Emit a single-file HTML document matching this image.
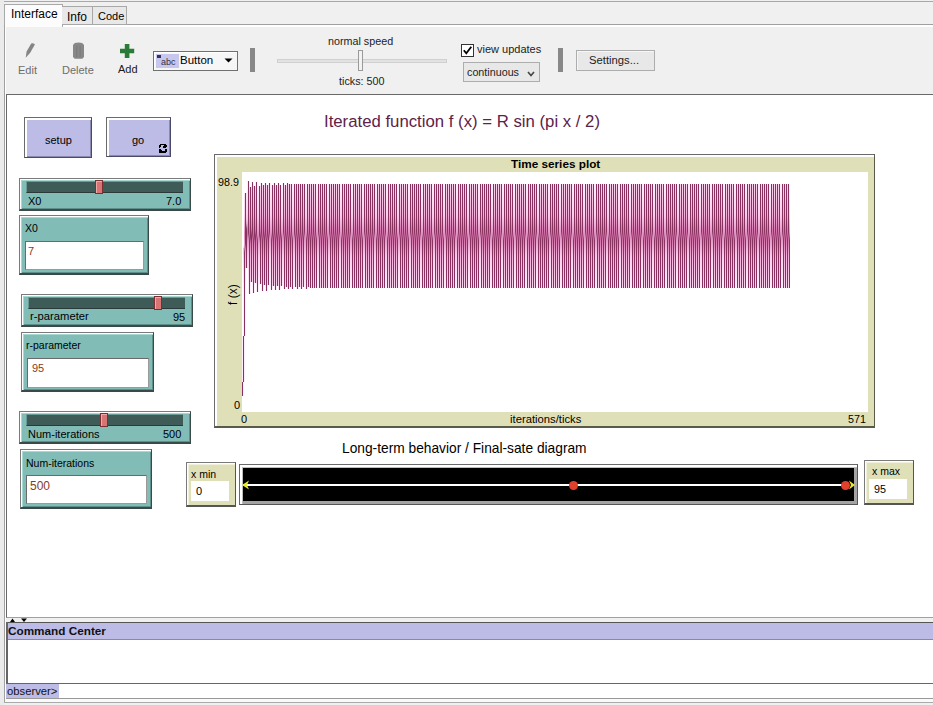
<!DOCTYPE html>
<html><head><meta charset="utf-8">
<style>
*{box-sizing:border-box;margin:0;padding:0}
html,body{width:933px;height:705px;overflow:hidden;background:#f0f0f0;font-family:"Liberation Sans",sans-serif;color:#000}
.a{position:absolute}
.t{position:absolute;white-space:nowrap;line-height:1}
.btn{position:absolute;background:#bcbce6;border-top:1px solid #6a6a6a;border-left:1px solid #6a6a6a;border-right:1px solid #4a4a68;border-bottom:1px solid #4a4a68;box-shadow:inset 2px 2px 0 #fff,inset -1px -1px 0 #8a8ab0}
.tw{position:absolute;background:#82bcb7;border-top:1px solid #7a7a7a;border-left:1px solid #7a7a7a;border-right:1px solid #3a4a48;border-bottom:2px solid #3a4a48;box-shadow:inset 1px 1px 0 #fff,inset 2px 2px 0 #a8d8d2,inset -1px -1px 0 #5f8f8a}
.trk{position:absolute;background:#3f5b58;border-top:1px solid #6a9a95;border-left:1px solid #6a9a95;border-bottom:1px solid #2a3a38}
.thumb{position:absolute;width:8px;height:14px;background:#d87474;border:1px solid #7a3030;box-shadow:inset 1px 1px 0 #f0a8a8}
.fld{position:absolute;background:#fff;border:1px solid #6a6a6a;border-right-color:#9a9a9a;border-bottom-color:#9a9a9a}
.bw{position:absolute;background:#e0e0b8;border-top:1px solid #7a7a7a;border-left:1px solid #7a7a7a;border-right:1px solid #555;border-bottom:2px solid #555;box-shadow:inset 1px 1px 0 #fff,inset 2px 2px 0 #f0f0dc}
.val{color:#8a3a1c}
</style></head><body>
<!-- left strip -->
<div class="a" style="left:0;top:0;width:4px;height:705px;background:#ebebeb"></div>
<!-- top line -->
<div class="a" style="left:4px;top:1px;width:929px;height:1px;background:#a8a8a8"></div>
<!-- tab strip bottom line -->
<div class="a" style="left:62px;top:24px;width:871px;height:1px;background:#a0a0a0"></div>
<!-- tabs -->
<div class="a" style="left:4px;top:4px;width:59px;height:23px;background:#fcfcfc;border:1px solid #a8a8a8;border-bottom:none"></div>
<div class="t" style="left:11px;top:8px;font-size:12px">Interface</div>
<div class="a" style="left:62px;top:6px;width:31px;height:19px;background:#e8e8e8;border:1px solid #a8a8a8;border-left:none"></div>
<div class="t" style="left:67px;top:11px;font-size:12px">Info</div>
<div class="a" style="left:92px;top:6px;width:35px;height:19px;background:#e8e8e8;border:1px solid #a8a8a8"></div>
<div class="t" style="left:98px;top:11px;font-size:11px">Code</div>
<!-- panel left line + highlight -->
<div class="a" style="left:4px;top:25px;width:1px;height:678px;background:#a0a0a0"></div>
<div class="a" style="left:5px;top:25px;width:1px;height:677px;background:#fff"></div>
<div class="a" style="left:63px;top:25px;width:870px;height:2px;background:#fff"></div>

<!-- toolbar -->
<svg class="a" style="left:24px;top:42px" width="12" height="17" viewBox="0 0 12 17"><path d="M1.7,15.8 L2.6,9.5 L7.2,1.6 Q9,0.6 10.9,2.4 L6.2,10.8 Z" fill="#858585"/></svg>
<div class="t" style="left:18px;top:65px;font-size:11px;color:#6d6d6d">Edit</div>
<svg class="a" style="left:72px;top:42px" width="13" height="18" viewBox="0 0 13 18"><path d="M2.8,1 Q6.5,0.2 10.2,1 L12,3 V15 L10.3,16.7 H2.7 L1,15 V3 Z" fill="#878787"/><path d="M4.7,4 V15 M8.2,4 V15" stroke="#777" stroke-width="0.8"/></svg>
<div class="t" style="left:62px;top:65px;font-size:11px;color:#6d6d6d">Delete</div>
<svg class="a" style="left:120px;top:44px" width="15" height="15" viewBox="0 0 15 15"><path d="M4.8,0 H9.4 V4.7 H14.2 V9.2 H9.4 V14 H4.8 V9.2 H0 V4.7 H4.8 Z" fill="#2a7a38"/></svg>
<div class="t" style="left:118px;top:64px;font-size:11px;color:#1a1a1a">Add</div>
<!-- widget dropdown -->
<div class="a" style="left:153px;top:51px;width:85px;height:20px;background:#f6f6f6;border:1px solid #707070;box-shadow:inset 1px 1px 0 #fff"></div>
<div class="a" style="left:156px;top:54px;width:23px;height:14px;background:#c6c6ee"></div>
<div class="t" style="left:161px;top:58px;font-size:9px;color:#334">abc</div>
<div class="a" style="left:157px;top:55px;width:4px;height:3px;background:#335"></div>
<div class="t" style="left:180px;top:55px;font-size:11.5px">Button</div>
<svg class="a" style="left:224px;top:58px" width="10" height="6"><path d="M0.5,0.5 H8.5 L4.5,4.5 Z" fill="#000"/></svg>
<div class="a" style="left:250px;top:48px;width:5px;height:24px;background:#888"></div>
<!-- speed slider -->
<div class="t" style="left:328px;top:36px;font-size:10.75px;color:#222">normal speed</div>
<div class="a" style="left:277px;top:59px;width:170px;height:4px;background:#e2e2e2;border:1px solid #d0d0d0"></div>
<div class="a" style="left:358px;top:50px;width:5px;height:21px;background:#f2f2f2;border:1px solid #9a9a9a"></div>
<div class="t" style="left:339px;top:76px;font-size:10.75px;color:#222">ticks: 500</div>
<!-- view updates -->
<div class="a" style="left:461px;top:44px;width:13px;height:13px;background:#fff;border:1px solid #333"></div>
<svg class="a" style="left:462px;top:45px" width="11" height="11"><path d="M1.8,5.2 L4.3,8.3 L9.3,1.8" stroke="#000" stroke-width="1.8" fill="none"/></svg>
<div class="t" style="left:477px;top:44px;font-size:11px;color:#222">view updates</div>
<div class="a" style="left:463px;top:62px;width:77px;height:20px;background:#e8e8e8;border:1px solid #adadad"></div>
<div class="t" style="left:467px;top:67px;font-size:10.75px;color:#222">continuous</div>
<svg class="a" style="left:527px;top:71px" width="8" height="6"><path d="M1,1 L4,4.5 L7,1" stroke="#444" stroke-width="1.6" fill="none"/></svg>
<div class="a" style="left:558px;top:48px;width:5px;height:24px;background:#888"></div>
<div class="a" style="left:576px;top:50px;width:79px;height:21px;background:#e8e8e8;border:1px solid #adadad;box-shadow:inset 1px 1px 0 #f6f6f6"></div>
<div class="t" style="left:589px;top:55px;font-size:11.25px;color:#222">Settings...</div>

<!-- interface area -->
<div class="a" style="left:6px;top:94px;width:927px;height:524px;background:#fff;border:1px solid #686868;border-right:none;border-bottom-color:#a0a0a0"></div>

<!-- title -->
<div class="t" style="left:324px;top:114px;font-size:16.75px;color:#5e2249">Iterated function f (x) = R sin (pi x / 2)</div>

<!-- buttons -->
<div class="btn" style="left:24px;top:117px;width:68px;height:41px"></div>
<div class="t" style="left:45px;top:135px;font-size:11px">setup</div>
<div class="btn" style="left:106px;top:117px;width:65px;height:40px"></div>
<div class="t" style="left:132px;top:135px;font-size:11px">go</div>
<svg class="a" style="left:158px;top:143px" width="10" height="11" viewBox="0 0 10 11" shape-rendering="crispEdges"><path d="M2,1h6v1h-6zM1,2h2v2h-2zM6,2h3v1h-3zM5,3h4v1h-4zM1,4h1v1h-1zM5,4h3v1h-3zM1,6h2v1h-2zM7,6h2v2h-2zM1,7h3v1h-3zM1,8h8v1h-8zM1,9h7v1h-7z" fill="#000"/></svg>

<!-- plot -->
<div class="a" style="left:214px;top:154px;width:661px;height:274px;background:#e0e0b8;border-top:1px solid #6a6a6a;border-left:1px solid #6a6a6a;border-right:1px solid #5a5a4a;border-bottom:2px solid #5a5a4a;box-shadow:inset 2px 2px 0 #fff"></div>
<div class="t" style="left:511px;top:158px;font-size:11.75px;font-weight:bold">Time series plot</div>
<div class="a" style="left:242px;top:172px;width:626px;height:240px;background:#fff"></div>
<svg class="a" style="left:0;top:0" width="933" height="705"><defs><g id="wave"><path d="M245 248h1v20h-1zM247 225h1v12h-1zM249 187h1v50h-1zM250 241h1v41h-1zM251 187h1v45h-1zM252 237h1v45h-1zM253 186h1v51h-1zM254 240h1v43h-1zM255 186h1v47h-1zM256 237h1v46h-1zM258 237h1v2h-1zM260 186h1v48h-1zM261 237h1v47h-1zM262 185h1v52h-1zM263 238h1v47h-1zM264 185h1v49h-1zM265 237h1v48h-1zM266 185h1v52h-1zM267 238h1v47h-1zM268 185h1v49h-1zM272 238h1v48h-1zM273 185h1v50h-1zM274 236h1v50h-1zM275 185h1v51h-1zM276 238h1v48h-1zM277 185h1v50h-1zM278 236h1v50h-1zM279 185h1v51h-1zM280 238h1v48h-1zM282 235h1v1h-1zM284 185h1v51h-1zM285 237h1v50h-1zM286 185h1v50h-1zM287 236h1v51h-1zM288 184h1v52h-1zM289 237h1v50h-1zM290 184h1v51h-1zM291 236h1v51h-1zM293 236h1v1h-1zM295 184h1v51h-1zM296 236h1v51h-1zM297 184h1v52h-1zM298 237h1v50h-1zM299 184h1v51h-1zM300 236h1v51h-1zM301 184h1v52h-1zM302 237h1v50h-1zM303 184h1v51h-1zM307 237h1v50h-1zM308 184h1v51h-1zM309 236h1v51h-1zM310 184h1v52h-1zM311 236h1v52h-1zM312 184h1v52h-1zM313 236h1v52h-1zM314 184h1v52h-1zM315 236h1v52h-1zM319 184h1v52h-1zM320 236h1v52h-1zM321 184h1v52h-1zM322 236h1v52h-1zM323 184h1v52h-1zM324 236h1v52h-1zM325 184h1v52h-1zM326 236h1v52h-1zM330 184h1v52h-1zM331 236h1v52h-1zM332 184h1v52h-1zM333 236h1v52h-1zM334 184h1v52h-1zM335 236h1v52h-1zM336 184h1v52h-1zM337 236h1v52h-1zM338 184h1v52h-1zM342 236h1v52h-1zM343 184h1v52h-1zM344 236h1v52h-1zM345 184h1v52h-1zM346 236h1v52h-1zM347 184h1v52h-1zM348 236h1v52h-1zM349 184h1v52h-1zM353 236h1v52h-1zM354 184h1v52h-1zM355 236h1v52h-1zM356 184h1v52h-1zM357 236h1v52h-1zM358 184h1v52h-1zM359 236h1v52h-1zM360 184h1v52h-1zM361 236h1v52h-1zM365 184h1v52h-1zM366 236h1v52h-1zM367 184h1v52h-1zM368 236h1v52h-1zM369 184h1v52h-1zM370 236h1v52h-1zM371 184h1v52h-1zM372 236h1v52h-1zM373 184h1v52h-1zM377 236h1v52h-1zM378 184h1v52h-1zM379 236h1v52h-1zM380 184h1v52h-1zM381 236h1v52h-1zM382 184h1v52h-1zM383 236h1v52h-1zM384 184h1v52h-1zM388 236h1v52h-1zM389 184h1v52h-1zM390 236h1v52h-1zM391 184h1v52h-1zM392 236h1v52h-1zM393 184h1v52h-1zM394 236h1v52h-1zM395 184h1v52h-1zM396 236h1v52h-1zM400 184h1v52h-1zM401 236h1v52h-1zM402 184h1v52h-1zM403 236h1v52h-1zM404 184h1v52h-1zM405 236h1v52h-1zM406 184h1v52h-1zM407 236h1v52h-1zM411 184h1v52h-1zM412 236h1v52h-1zM413 184h1v52h-1zM414 236h1v52h-1zM415 184h1v52h-1zM416 236h1v52h-1zM417 184h1v52h-1zM418 236h1v52h-1zM419 184h1v52h-1zM423 236h1v52h-1zM424 184h1v52h-1zM425 236h1v52h-1zM426 184h1v52h-1zM427 236h1v52h-1zM428 184h1v52h-1zM429 236h1v52h-1zM430 184h1v52h-1zM431 236h1v52h-1zM435 184h1v52h-1zM436 236h1v52h-1zM437 184h1v52h-1zM438 236h1v52h-1zM439 184h1v52h-1zM440 236h1v52h-1zM441 184h1v52h-1zM442 236h1v52h-1zM446 184h1v52h-1zM447 236h1v52h-1zM448 184h1v52h-1zM449 236h1v52h-1zM450 184h1v52h-1zM451 236h1v52h-1zM452 184h1v52h-1zM453 236h1v52h-1zM454 184h1v52h-1zM458 236h1v52h-1zM459 184h1v52h-1zM460 236h1v52h-1zM461 184h1v52h-1zM462 236h1v52h-1zM463 184h1v52h-1zM464 236h1v52h-1zM465 184h1v52h-1zM466 236h1v52h-1zM470 184h1v52h-1zM471 236h1v52h-1zM472 184h1v52h-1zM473 236h1v52h-1zM474 184h1v52h-1zM475 236h1v52h-1zM476 184h1v52h-1zM477 236h1v52h-1zM481 184h1v52h-1zM482 236h1v52h-1zM483 184h1v52h-1zM484 236h1v52h-1zM485 184h1v52h-1zM486 236h1v52h-1zM487 184h1v52h-1zM488 236h1v52h-1zM489 184h1v52h-1zM493 236h1v52h-1zM494 184h1v52h-1zM495 236h1v52h-1zM496 184h1v52h-1zM497 236h1v52h-1zM498 184h1v52h-1zM499 236h1v52h-1zM500 184h1v52h-1zM504 236h1v52h-1zM505 184h1v52h-1zM506 236h1v52h-1zM507 184h1v52h-1zM508 236h1v52h-1zM509 184h1v52h-1zM510 236h1v52h-1zM511 184h1v52h-1zM512 236h1v52h-1zM516 184h1v52h-1zM517 236h1v52h-1zM518 184h1v52h-1zM519 236h1v52h-1zM520 184h1v52h-1zM521 236h1v52h-1zM522 184h1v52h-1zM523 236h1v52h-1zM524 184h1v52h-1zM528 236h1v52h-1zM529 184h1v52h-1zM530 236h1v52h-1zM531 184h1v52h-1zM532 236h1v52h-1zM533 184h1v52h-1zM534 236h1v52h-1zM535 184h1v52h-1zM539 236h1v52h-1zM540 184h1v52h-1zM541 236h1v52h-1zM542 184h1v52h-1zM543 236h1v52h-1zM544 184h1v52h-1zM545 236h1v52h-1zM546 184h1v52h-1zM547 236h1v52h-1zM551 184h1v52h-1zM552 236h1v52h-1zM553 184h1v52h-1zM554 236h1v52h-1zM555 184h1v52h-1zM556 236h1v52h-1zM557 184h1v52h-1zM558 236h1v52h-1zM562 184h1v52h-1zM563 236h1v52h-1zM564 184h1v52h-1zM565 236h1v52h-1zM566 184h1v52h-1zM567 236h1v52h-1zM568 184h1v52h-1zM569 236h1v52h-1zM570 184h1v52h-1zM574 236h1v52h-1zM575 184h1v52h-1zM576 236h1v52h-1zM577 184h1v52h-1zM578 236h1v52h-1zM579 184h1v52h-1zM580 236h1v52h-1zM581 184h1v52h-1zM582 236h1v52h-1zM586 184h1v52h-1zM587 236h1v52h-1zM588 184h1v52h-1zM589 236h1v52h-1zM590 184h1v52h-1zM591 236h1v52h-1zM592 184h1v52h-1zM593 236h1v52h-1zM597 184h1v52h-1zM598 236h1v52h-1zM599 184h1v52h-1zM600 236h1v52h-1zM601 184h1v52h-1zM602 236h1v52h-1zM603 184h1v52h-1zM604 236h1v52h-1zM605 184h1v52h-1zM609 236h1v52h-1zM610 184h1v52h-1zM611 236h1v52h-1zM612 184h1v52h-1zM613 236h1v52h-1zM614 184h1v52h-1zM615 236h1v52h-1zM616 184h1v52h-1zM617 236h1v52h-1zM621 184h1v52h-1zM622 236h1v52h-1zM623 184h1v52h-1zM624 236h1v52h-1zM625 184h1v52h-1zM626 236h1v52h-1zM627 184h1v52h-1zM628 236h1v52h-1zM632 184h1v52h-1zM633 236h1v52h-1zM634 184h1v52h-1zM635 236h1v52h-1zM636 184h1v52h-1zM637 236h1v52h-1zM638 184h1v52h-1zM639 236h1v52h-1zM640 184h1v52h-1zM644 236h1v52h-1zM645 184h1v52h-1zM646 236h1v52h-1zM647 184h1v52h-1zM648 236h1v52h-1zM649 184h1v52h-1zM650 236h1v52h-1zM651 184h1v52h-1zM655 236h1v52h-1zM656 184h1v52h-1zM657 236h1v52h-1zM658 184h1v52h-1zM659 236h1v52h-1zM660 184h1v52h-1zM661 236h1v52h-1zM662 184h1v52h-1zM663 236h1v52h-1zM667 184h1v52h-1zM668 236h1v52h-1zM669 184h1v52h-1zM670 236h1v52h-1zM671 184h1v52h-1zM672 236h1v52h-1zM673 184h1v52h-1zM674 236h1v52h-1zM675 184h1v52h-1zM679 236h1v52h-1zM680 184h1v52h-1zM681 236h1v52h-1zM682 184h1v52h-1zM683 236h1v52h-1zM684 184h1v52h-1zM685 236h1v52h-1zM686 184h1v52h-1zM690 236h1v52h-1zM691 184h1v52h-1zM692 236h1v52h-1zM693 184h1v52h-1zM694 236h1v52h-1zM695 184h1v52h-1zM696 236h1v52h-1zM697 184h1v52h-1zM698 236h1v52h-1zM702 184h1v52h-1zM703 236h1v52h-1zM704 184h1v52h-1zM705 236h1v52h-1zM706 184h1v52h-1zM707 236h1v52h-1zM708 184h1v52h-1zM709 236h1v52h-1zM713 184h1v52h-1zM714 236h1v52h-1zM715 184h1v52h-1zM716 236h1v52h-1zM717 184h1v52h-1zM718 236h1v52h-1zM719 184h1v52h-1zM720 236h1v52h-1zM721 184h1v52h-1zM725 236h1v52h-1zM726 184h1v52h-1zM727 236h1v52h-1zM728 184h1v52h-1zM729 236h1v52h-1zM730 184h1v52h-1zM731 236h1v52h-1zM732 184h1v52h-1zM733 236h1v52h-1zM737 184h1v52h-1zM738 236h1v52h-1zM739 184h1v52h-1zM740 236h1v52h-1zM741 184h1v52h-1zM742 236h1v52h-1zM743 184h1v52h-1zM744 236h1v52h-1zM748 184h1v52h-1zM749 236h1v52h-1zM750 184h1v52h-1zM751 236h1v52h-1zM752 184h1v52h-1zM753 236h1v52h-1zM754 184h1v52h-1zM755 236h1v52h-1zM756 184h1v52h-1zM760 236h1v52h-1zM761 184h1v52h-1zM762 236h1v52h-1zM763 184h1v52h-1zM764 236h1v52h-1zM765 184h1v52h-1zM766 236h1v52h-1zM767 184h1v52h-1zM768 236h1v52h-1zM772 184h1v52h-1zM773 236h1v52h-1zM774 184h1v52h-1zM775 236h1v52h-1zM776 184h1v52h-1zM777 236h1v52h-1zM778 184h1v52h-1zM779 236h1v52h-1zM783 184h1v52h-1zM784 236h1v52h-1zM785 184h1v52h-1zM786 236h1v52h-1zM787 184h1v52h-1zM788 236h1v52h-1z" fill="url(#gp)" shape-rendering="crispEdges"/><path d="M242 336h1v46h-1zM243 248h1v88h-1zM243 382h1v14h-1zM244 193h1v55h-1zM244 336h1v46h-1zM245 268h1v68h-1zM246 193h1v32h-1zM247 181h1v44h-1zM247 237h1v31h-1zM248 237h1v57h-1zM249 181h1v6h-1zM250 282h1v12h-1zM251 182h1v5h-1zM252 282h1v11h-1zM253 182h1v4h-1zM254 283h1v10h-1zM255 182h1v4h-1zM256 283h1v9h-1zM257 182h1v55h-1zM258 186h1v51h-1zM258 239h1v53h-1zM259 239h1v45h-1zM260 183h1v3h-1zM261 284h1v7h-1zM262 183h1v2h-1zM263 285h1v6h-1zM264 183h1v2h-1zM265 285h1v6h-1zM266 183h1v2h-1zM267 285h1v6h-1zM268 183h1v2h-1zM269 236h1v49h-1zM270 183h1v107h-1zM271 185h1v51h-1zM272 286h1v4h-1zM273 183h1v2h-1zM274 286h1v4h-1zM275 183h1v2h-1zM276 286h1v4h-1zM277 183h1v2h-1zM278 286h1v4h-1zM279 183h1v2h-1zM280 286h1v4h-1zM281 185h1v50h-1zM282 183h1v52h-1zM282 236h1v50h-1zM283 236h1v53h-1zM284 183h1v2h-1zM285 287h1v2h-1zM286 183h1v2h-1zM287 287h1v2h-1zM288 183h1v1h-1zM289 287h1v2h-1zM291 287h1v2h-1zM292 184h1v52h-1zM293 184h1v52h-1zM293 237h1v52h-1zM294 237h1v50h-1zM296 287h1v2h-1zM298 287h1v2h-1zM300 287h1v2h-1zM302 287h1v2h-1zM304 236h1v51h-1zM305 184h1v105h-1zM306 184h1v52h-1zM307 287h1v2h-1zM309 287h1v1h-1zM316 184h1v52h-1zM317 184h1v104h-1zM318 236h1v52h-1zM327 184h1v52h-1zM328 184h1v104h-1zM329 236h1v52h-1zM339 236h1v52h-1zM340 184h1v104h-1zM341 184h1v52h-1zM350 236h1v52h-1zM351 184h1v104h-1zM352 184h1v52h-1zM362 184h1v52h-1zM363 184h1v104h-1zM364 236h1v52h-1zM374 236h1v52h-1zM375 184h1v104h-1zM376 184h1v52h-1zM385 236h1v52h-1zM386 184h1v104h-1zM387 184h1v52h-1zM397 184h1v52h-1zM398 184h1v104h-1zM399 236h1v52h-1zM408 184h1v52h-1zM409 184h1v104h-1zM410 236h1v52h-1zM420 236h1v52h-1zM421 184h1v104h-1zM422 184h1v52h-1zM432 184h1v52h-1zM433 184h1v104h-1zM434 236h1v52h-1zM443 184h1v52h-1zM444 184h1v104h-1zM445 236h1v52h-1zM455 236h1v52h-1zM456 184h1v104h-1zM457 184h1v52h-1zM467 184h1v52h-1zM468 184h1v104h-1zM469 236h1v52h-1zM478 184h1v52h-1zM479 184h1v104h-1zM480 236h1v52h-1zM490 236h1v52h-1zM491 184h1v104h-1zM492 184h1v52h-1zM501 236h1v52h-1zM502 184h1v104h-1zM503 184h1v52h-1zM513 184h1v52h-1zM514 184h1v104h-1zM515 236h1v52h-1zM525 236h1v52h-1zM526 184h1v104h-1zM527 184h1v52h-1zM536 236h1v52h-1zM537 184h1v104h-1zM538 184h1v52h-1zM548 184h1v52h-1zM549 184h1v104h-1zM550 236h1v52h-1zM559 184h1v52h-1zM560 184h1v104h-1zM561 236h1v52h-1zM571 236h1v52h-1zM572 184h1v104h-1zM573 184h1v52h-1zM583 184h1v52h-1zM584 184h1v104h-1zM585 236h1v52h-1zM594 184h1v52h-1zM595 184h1v104h-1zM596 236h1v52h-1zM606 236h1v52h-1zM607 184h1v104h-1zM608 184h1v52h-1zM618 184h1v52h-1zM619 184h1v104h-1zM620 236h1v52h-1zM629 184h1v52h-1zM630 184h1v104h-1zM631 236h1v52h-1zM641 236h1v52h-1zM642 184h1v104h-1zM643 184h1v52h-1zM652 236h1v52h-1zM653 184h1v104h-1zM654 184h1v52h-1zM664 184h1v52h-1zM665 184h1v104h-1zM666 236h1v52h-1zM676 236h1v52h-1zM677 184h1v104h-1zM678 184h1v52h-1zM687 236h1v52h-1zM688 184h1v104h-1zM689 184h1v52h-1zM699 184h1v52h-1zM700 184h1v104h-1zM701 236h1v52h-1zM710 184h1v52h-1zM711 184h1v104h-1zM712 236h1v52h-1zM722 236h1v52h-1zM723 184h1v104h-1zM724 184h1v52h-1zM734 184h1v52h-1zM735 184h1v104h-1zM736 236h1v52h-1zM745 184h1v52h-1zM746 184h1v104h-1zM747 236h1v52h-1zM757 236h1v52h-1zM758 184h1v104h-1zM759 184h1v52h-1zM769 184h1v52h-1zM770 184h1v104h-1zM771 236h1v52h-1zM780 184h1v52h-1zM781 184h1v104h-1zM782 236h1v52h-1zM789 184h1v52h-1z" fill="url(#gl)" shape-rendering="crispEdges"/><path d="M242 382h1v14h-1zM243 336h1v46h-1zM244 248h1v88h-1zM245 193h1v55h-1zM246 225h1v43h-1zM248 181h1v56h-1zM249 237h1v57h-1zM250 187h1v54h-1zM251 232h1v50h-1zM252 182h1v55h-1zM253 237h1v56h-1zM254 186h1v54h-1zM255 233h1v50h-1zM256 182h1v55h-1zM257 237h1v55h-1zM259 186h1v53h-1zM260 234h1v50h-1zM261 183h1v54h-1zM262 237h1v54h-1zM263 185h1v53h-1zM264 234h1v51h-1zM265 183h1v54h-1zM266 237h1v54h-1zM267 185h1v53h-1zM268 234h1v51h-1zM269 183h1v53h-1zM271 236h1v54h-1zM272 185h1v53h-1zM273 235h1v51h-1zM274 183h1v53h-1zM275 236h1v54h-1zM276 185h1v53h-1zM277 235h1v51h-1zM278 183h1v53h-1zM279 236h1v54h-1zM280 185h1v53h-1zM281 235h1v51h-1zM283 183h1v53h-1zM284 236h1v53h-1zM285 185h1v52h-1zM286 235h1v52h-1zM287 183h1v53h-1zM288 236h1v53h-1zM289 184h1v53h-1zM290 235h1v52h-1zM291 184h1v52h-1zM292 236h1v53h-1zM294 184h1v53h-1zM295 235h1v52h-1zM296 184h1v52h-1zM297 236h1v53h-1zM298 184h1v53h-1zM299 235h1v52h-1zM300 184h1v52h-1zM301 236h1v53h-1zM302 184h1v53h-1zM303 235h1v52h-1zM304 184h1v52h-1zM306 236h1v53h-1zM307 184h1v53h-1zM308 235h1v52h-1zM309 184h1v52h-1zM310 236h1v52h-1zM311 184h1v52h-1zM312 236h1v52h-1zM313 184h1v52h-1zM314 236h1v52h-1zM315 184h1v52h-1zM316 236h1v52h-1zM318 184h1v52h-1zM319 236h1v52h-1zM320 184h1v52h-1zM321 236h1v52h-1zM322 184h1v52h-1zM323 236h1v52h-1zM324 184h1v52h-1zM325 236h1v52h-1zM326 184h1v52h-1zM327 236h1v52h-1zM329 184h1v52h-1zM330 236h1v52h-1zM331 184h1v52h-1zM332 236h1v52h-1zM333 184h1v52h-1zM334 236h1v52h-1zM335 184h1v52h-1zM336 236h1v52h-1zM337 184h1v52h-1zM338 236h1v52h-1zM339 184h1v52h-1zM341 236h1v52h-1zM342 184h1v52h-1zM343 236h1v52h-1zM344 184h1v52h-1zM345 236h1v52h-1zM346 184h1v52h-1zM347 236h1v52h-1zM348 184h1v52h-1zM349 236h1v52h-1zM350 184h1v52h-1zM352 236h1v52h-1zM353 184h1v52h-1zM354 236h1v52h-1zM355 184h1v52h-1zM356 236h1v52h-1zM357 184h1v52h-1zM358 236h1v52h-1zM359 184h1v52h-1zM360 236h1v52h-1zM361 184h1v52h-1zM362 236h1v52h-1zM364 184h1v52h-1zM365 236h1v52h-1zM366 184h1v52h-1zM367 236h1v52h-1zM368 184h1v52h-1zM369 236h1v52h-1zM370 184h1v52h-1zM371 236h1v52h-1zM372 184h1v52h-1zM373 236h1v52h-1zM374 184h1v52h-1zM376 236h1v52h-1zM377 184h1v52h-1zM378 236h1v52h-1zM379 184h1v52h-1zM380 236h1v52h-1zM381 184h1v52h-1zM382 236h1v52h-1zM383 184h1v52h-1zM384 236h1v52h-1zM385 184h1v52h-1zM387 236h1v52h-1zM388 184h1v52h-1zM389 236h1v52h-1zM390 184h1v52h-1zM391 236h1v52h-1zM392 184h1v52h-1zM393 236h1v52h-1zM394 184h1v52h-1zM395 236h1v52h-1zM396 184h1v52h-1zM397 236h1v52h-1zM399 184h1v52h-1zM400 236h1v52h-1zM401 184h1v52h-1zM402 236h1v52h-1zM403 184h1v52h-1zM404 236h1v52h-1zM405 184h1v52h-1zM406 236h1v52h-1zM407 184h1v52h-1zM408 236h1v52h-1zM410 184h1v52h-1zM411 236h1v52h-1zM412 184h1v52h-1zM413 236h1v52h-1zM414 184h1v52h-1zM415 236h1v52h-1zM416 184h1v52h-1zM417 236h1v52h-1zM418 184h1v52h-1zM419 236h1v52h-1zM420 184h1v52h-1zM422 236h1v52h-1zM423 184h1v52h-1zM424 236h1v52h-1zM425 184h1v52h-1zM426 236h1v52h-1zM427 184h1v52h-1zM428 236h1v52h-1zM429 184h1v52h-1zM430 236h1v52h-1zM431 184h1v52h-1zM432 236h1v52h-1zM434 184h1v52h-1zM435 236h1v52h-1zM436 184h1v52h-1zM437 236h1v52h-1zM438 184h1v52h-1zM439 236h1v52h-1zM440 184h1v52h-1zM441 236h1v52h-1zM442 184h1v52h-1zM443 236h1v52h-1zM445 184h1v52h-1zM446 236h1v52h-1zM447 184h1v52h-1zM448 236h1v52h-1zM449 184h1v52h-1zM450 236h1v52h-1zM451 184h1v52h-1zM452 236h1v52h-1zM453 184h1v52h-1zM454 236h1v52h-1zM455 184h1v52h-1zM457 236h1v52h-1zM458 184h1v52h-1zM459 236h1v52h-1zM460 184h1v52h-1zM461 236h1v52h-1zM462 184h1v52h-1zM463 236h1v52h-1zM464 184h1v52h-1zM465 236h1v52h-1zM466 184h1v52h-1zM467 236h1v52h-1zM469 184h1v52h-1zM470 236h1v52h-1zM471 184h1v52h-1zM472 236h1v52h-1zM473 184h1v52h-1zM474 236h1v52h-1zM475 184h1v52h-1zM476 236h1v52h-1zM477 184h1v52h-1zM478 236h1v52h-1zM480 184h1v52h-1zM481 236h1v52h-1zM482 184h1v52h-1zM483 236h1v52h-1zM484 184h1v52h-1zM485 236h1v52h-1zM486 184h1v52h-1zM487 236h1v52h-1zM488 184h1v52h-1zM489 236h1v52h-1zM490 184h1v52h-1zM492 236h1v52h-1zM493 184h1v52h-1zM494 236h1v52h-1zM495 184h1v52h-1zM496 236h1v52h-1zM497 184h1v52h-1zM498 236h1v52h-1zM499 184h1v52h-1zM500 236h1v52h-1zM501 184h1v52h-1zM503 236h1v52h-1zM504 184h1v52h-1zM505 236h1v52h-1zM506 184h1v52h-1zM507 236h1v52h-1zM508 184h1v52h-1zM509 236h1v52h-1zM510 184h1v52h-1zM511 236h1v52h-1zM512 184h1v52h-1zM513 236h1v52h-1zM515 184h1v52h-1zM516 236h1v52h-1zM517 184h1v52h-1zM518 236h1v52h-1zM519 184h1v52h-1zM520 236h1v52h-1zM521 184h1v52h-1zM522 236h1v52h-1zM523 184h1v52h-1zM524 236h1v52h-1zM525 184h1v52h-1zM527 236h1v52h-1zM528 184h1v52h-1zM529 236h1v52h-1zM530 184h1v52h-1zM531 236h1v52h-1zM532 184h1v52h-1zM533 236h1v52h-1zM534 184h1v52h-1zM535 236h1v52h-1zM536 184h1v52h-1zM538 236h1v52h-1zM539 184h1v52h-1zM540 236h1v52h-1zM541 184h1v52h-1zM542 236h1v52h-1zM543 184h1v52h-1zM544 236h1v52h-1zM545 184h1v52h-1zM546 236h1v52h-1zM547 184h1v52h-1zM548 236h1v52h-1zM550 184h1v52h-1zM551 236h1v52h-1zM552 184h1v52h-1zM553 236h1v52h-1zM554 184h1v52h-1zM555 236h1v52h-1zM556 184h1v52h-1zM557 236h1v52h-1zM558 184h1v52h-1zM559 236h1v52h-1zM561 184h1v52h-1zM562 236h1v52h-1zM563 184h1v52h-1zM564 236h1v52h-1zM565 184h1v52h-1zM566 236h1v52h-1zM567 184h1v52h-1zM568 236h1v52h-1zM569 184h1v52h-1zM570 236h1v52h-1zM571 184h1v52h-1zM573 236h1v52h-1zM574 184h1v52h-1zM575 236h1v52h-1zM576 184h1v52h-1zM577 236h1v52h-1zM578 184h1v52h-1zM579 236h1v52h-1zM580 184h1v52h-1zM581 236h1v52h-1zM582 184h1v52h-1zM583 236h1v52h-1zM585 184h1v52h-1zM586 236h1v52h-1zM587 184h1v52h-1zM588 236h1v52h-1zM589 184h1v52h-1zM590 236h1v52h-1zM591 184h1v52h-1zM592 236h1v52h-1zM593 184h1v52h-1zM594 236h1v52h-1zM596 184h1v52h-1zM597 236h1v52h-1zM598 184h1v52h-1zM599 236h1v52h-1zM600 184h1v52h-1zM601 236h1v52h-1zM602 184h1v52h-1zM603 236h1v52h-1zM604 184h1v52h-1zM605 236h1v52h-1zM606 184h1v52h-1zM608 236h1v52h-1zM609 184h1v52h-1zM610 236h1v52h-1zM611 184h1v52h-1zM612 236h1v52h-1zM613 184h1v52h-1zM614 236h1v52h-1zM615 184h1v52h-1zM616 236h1v52h-1zM617 184h1v52h-1zM618 236h1v52h-1zM620 184h1v52h-1zM621 236h1v52h-1zM622 184h1v52h-1zM623 236h1v52h-1zM624 184h1v52h-1zM625 236h1v52h-1zM626 184h1v52h-1zM627 236h1v52h-1zM628 184h1v52h-1zM629 236h1v52h-1zM631 184h1v52h-1zM632 236h1v52h-1zM633 184h1v52h-1zM634 236h1v52h-1zM635 184h1v52h-1zM636 236h1v52h-1zM637 184h1v52h-1zM638 236h1v52h-1zM639 184h1v52h-1zM640 236h1v52h-1zM641 184h1v52h-1zM643 236h1v52h-1zM644 184h1v52h-1zM645 236h1v52h-1zM646 184h1v52h-1zM647 236h1v52h-1zM648 184h1v52h-1zM649 236h1v52h-1zM650 184h1v52h-1zM651 236h1v52h-1zM652 184h1v52h-1zM654 236h1v52h-1zM655 184h1v52h-1zM656 236h1v52h-1zM657 184h1v52h-1zM658 236h1v52h-1zM659 184h1v52h-1zM660 236h1v52h-1zM661 184h1v52h-1zM662 236h1v52h-1zM663 184h1v52h-1zM664 236h1v52h-1zM666 184h1v52h-1zM667 236h1v52h-1zM668 184h1v52h-1zM669 236h1v52h-1zM670 184h1v52h-1zM671 236h1v52h-1zM672 184h1v52h-1zM673 236h1v52h-1zM674 184h1v52h-1zM675 236h1v52h-1zM676 184h1v52h-1zM678 236h1v52h-1zM679 184h1v52h-1zM680 236h1v52h-1zM681 184h1v52h-1zM682 236h1v52h-1zM683 184h1v52h-1zM684 236h1v52h-1zM685 184h1v52h-1zM686 236h1v52h-1zM687 184h1v52h-1zM689 236h1v52h-1zM690 184h1v52h-1zM691 236h1v52h-1zM692 184h1v52h-1zM693 236h1v52h-1zM694 184h1v52h-1zM695 236h1v52h-1zM696 184h1v52h-1zM697 236h1v52h-1zM698 184h1v52h-1zM699 236h1v52h-1zM701 184h1v52h-1zM702 236h1v52h-1zM703 184h1v52h-1zM704 236h1v52h-1zM705 184h1v52h-1zM706 236h1v52h-1zM707 184h1v52h-1zM708 236h1v52h-1zM709 184h1v52h-1zM710 236h1v52h-1zM712 184h1v52h-1zM713 236h1v52h-1zM714 184h1v52h-1zM715 236h1v52h-1zM716 184h1v52h-1zM717 236h1v52h-1zM718 184h1v52h-1zM719 236h1v52h-1zM720 184h1v52h-1zM721 236h1v52h-1zM722 184h1v52h-1zM724 236h1v52h-1zM725 184h1v52h-1zM726 236h1v52h-1zM727 184h1v52h-1zM728 236h1v52h-1zM729 184h1v52h-1zM730 236h1v52h-1zM731 184h1v52h-1zM732 236h1v52h-1zM733 184h1v52h-1zM734 236h1v52h-1zM736 184h1v52h-1zM737 236h1v52h-1zM738 184h1v52h-1zM739 236h1v52h-1zM740 184h1v52h-1zM741 236h1v52h-1zM742 184h1v52h-1zM743 236h1v52h-1zM744 184h1v52h-1zM745 236h1v52h-1zM747 184h1v52h-1zM748 236h1v52h-1zM749 184h1v52h-1zM750 236h1v52h-1zM751 184h1v52h-1zM752 236h1v52h-1zM753 184h1v52h-1zM754 236h1v52h-1zM755 184h1v52h-1zM756 236h1v52h-1zM757 184h1v52h-1zM759 236h1v52h-1zM760 184h1v52h-1zM761 236h1v52h-1zM762 184h1v52h-1zM763 236h1v52h-1zM764 184h1v52h-1zM765 236h1v52h-1zM766 184h1v52h-1zM767 236h1v52h-1zM768 184h1v52h-1zM769 236h1v52h-1zM771 184h1v52h-1zM772 236h1v52h-1zM773 184h1v52h-1zM774 236h1v52h-1zM775 184h1v52h-1zM776 236h1v52h-1zM777 184h1v52h-1zM778 236h1v52h-1zM779 184h1v52h-1zM780 236h1v52h-1zM782 184h1v52h-1zM783 236h1v52h-1zM784 184h1v52h-1zM785 236h1v52h-1zM786 184h1v52h-1zM787 236h1v52h-1zM788 184h1v52h-1zM789 236h1v52h-1z" fill="#88305f" shape-rendering="crispEdges"/></g><clipPath id="mid"><rect x="200" y="214" width="700" height="44"/></clipPath><filter id="bh" x="200" y="150" width="700" height="280" filterUnits="userSpaceOnUse"><feGaussianBlur stdDeviation="0.8 0.3"/></filter><filter id="bl" x="200" y="150" width="700" height="280" filterUnits="userSpaceOnUse"><feGaussianBlur stdDeviation="0.45 2.5"/></filter><linearGradient id="gp" gradientUnits="userSpaceOnUse" x1="0" y1="184" x2="0" y2="288"><stop offset="0" stop-color="#fbd6f0"/><stop offset="0.3" stop-color="#f6b0dc"/><stop offset="0.5" stop-color="#cc64a0"/><stop offset="0.7" stop-color="#f6b0dc"/><stop offset="1" stop-color="#fbd6f0"/></linearGradient><linearGradient id="gl" gradientUnits="userSpaceOnUse" x1="0" y1="184" x2="0" y2="288"><stop offset="0" stop-color="#fdeefa"/><stop offset="0.3" stop-color="#fad0ec"/><stop offset="0.5" stop-color="#e08cc0"/><stop offset="0.7" stop-color="#fad0ec"/><stop offset="1" stop-color="#fdeefa"/></linearGradient></defs><use href="#wave"/><g clip-path="url(#mid)"><use href="#wave" filter="url(#bl)"/></g></svg>
<div class="t" style="left:218px;top:177px;font-size:10.75px">98.9</div>
<div class="t" style="left:234px;top:400px;font-size:11px">0</div>
<div class="t" style="left:241px;top:414px;font-size:11px">0</div>
<div class="t" style="left:510px;top:414px;font-size:11.25px">iterations/ticks</div>
<div class="t" style="left:848px;top:414px;font-size:10.75px">571</div>
<div class="t" style="font-size:12px;transform:rotate(-90deg);transform-origin:0 0;top:305px;left:227px">f (x)</div>

<!-- sliders & inputs -->
<div class="tw" style="left:19px;top:178px;width:172px;height:33px"></div>
<div class="trk" style="left:26px;top:181px;width:157px;height:12px"></div>
<div class="thumb" style="left:95px;top:180px"></div>
<div class="t" style="left:28px;top:196px;font-size:11px">X0</div>
<div class="t" style="left:166px;top:196px;font-size:11px">7.0</div>

<div class="tw" style="left:19px;top:215px;width:130px;height:60px"></div>
<div class="t" style="left:25px;top:223px;font-size:10.5px">X0</div>
<div class="fld" style="left:25px;top:241px;width:119px;height:29px"></div>
<div class="t val" style="left:28px;top:246px;font-size:11px">7</div>

<div class="tw" style="left:21px;top:294px;width:172px;height:33px"></div>
<div class="trk" style="left:28px;top:297px;width:157px;height:12px"></div>
<div class="thumb" style="left:154px;top:296px"></div>
<div class="t" style="left:30px;top:311px;font-size:11.25px">r-parameter</div>
<div class="t" style="left:173px;top:312px;font-size:11px">95</div>

<div class="tw" style="left:21px;top:332px;width:133px;height:60px"></div>
<div class="t" style="left:26px;top:340px;font-size:10.5px">r-parameter</div>
<div class="fld" style="left:27px;top:358px;width:122px;height:30px"></div>
<div class="t val" style="left:32px;top:363px;font-size:11px">95</div>

<div class="tw" style="left:19px;top:411px;width:172px;height:33px"></div>
<div class="trk" style="left:26px;top:414px;width:157px;height:12px"></div>
<div class="thumb" style="left:100px;top:413px"></div>
<div class="t" style="left:28px;top:429px;font-size:11px">Num-iterations</div>
<div class="t" style="left:163px;top:429px;font-size:11px">500</div>

<div class="tw" style="left:20px;top:449px;width:132px;height:60px"></div>
<div class="t" style="left:26px;top:458px;font-size:10.5px">Num-iterations</div>
<div class="fld" style="left:26px;top:475px;width:121px;height:29px"></div>
<div class="t val" style="left:30px;top:480px;font-size:12px">500</div>

<!-- long-term -->
<div class="t" style="left:342px;top:442px;font-size:13.75px">Long-term behavior / Final-sate diagram</div>
<div class="bw" style="left:186px;top:462px;width:50px;height:45px"></div>
<div class="t" style="left:191px;top:469px;font-size:10.5px">x min</div>
<div class="a" style="left:191px;top:481px;width:38px;height:20px;background:#fff"></div>
<div class="t" style="left:196px;top:486px;font-size:11px">0</div>

<div class="a" style="left:239px;top:464px;width:619px;height:41px;background:#000;border-top:1px solid #6a6a6a;border-left:1px solid #6a6a6a;border-right:1px solid #555;border-bottom:1px solid #555;box-shadow:inset 2px 2px 0 #fff,inset 3px 3px 0 #bdbdbd,inset -3px -3px 0 #a4a4a4"></div>
<div class="a" style="left:243px;top:484px;width:606px;height:2px;background:#fff"></div>
<svg class="a" style="left:242px;top:480px" width="8" height="10"><path d="M0,5 L7,0.5 L5,5 L7,9.5 Z" fill="#e8e830"/></svg>
<svg class="a" style="left:849px;top:480px" width="8" height="10"><path d="M6,5 L0,0.5 L2,5 L0,9.5 Z" fill="#e8e830"/></svg>
<div class="a" style="left:569px;top:481px;width:9px;height:9px;border-radius:50%;background:#e0402c"></div>
<div class="a" style="left:841px;top:481px;width:9px;height:9px;border-radius:50%;background:#e0402c"></div>

<div class="bw" style="left:864px;top:460px;width:50px;height:45px"></div>
<div class="t" style="left:872px;top:466px;font-size:10.5px">x max</div>
<div class="a" style="left:869px;top:479px;width:38px;height:20px;background:#fff"></div>
<div class="t" style="left:874px;top:484px;font-size:10.75px">95</div>

<!-- splitter -->
<svg class="a" style="left:9px;top:618px" width="20" height="5"><path d="M1,4 L3.5,0.5 L6,4 Z M12,0.5 H18 L15,4 Z" fill="#000"/></svg>

<!-- command center -->
<div class="a" style="left:6px;top:622px;width:927px;height:1px;background:#555"></div>
<div class="a" style="left:6px;top:623px;width:927px;height:16px;background:#bcbce6"></div>
<div class="a" style="left:6px;top:639px;width:927px;height:1px;background:#8888aa"></div>
<div class="t" style="left:8px;top:625px;font-size:11.75px;font-weight:bold;color:#111">Command Center</div>
<div class="a" style="left:6px;top:622px;width:2px;height:77px;background:#666"></div>
<div class="a" style="left:8px;top:640px;width:925px;height:43px;background:#fff"></div>
<div class="a" style="left:6px;top:683px;width:927px;height:1px;background:#666"></div>
<div class="a" style="left:6px;top:684px;width:53px;height:14px;background:#bcbce6"></div>
<div class="t" style="left:7px;top:686px;font-size:11.25px;color:#111">observer&gt;</div>
<div class="a" style="left:59px;top:684px;width:874px;height:14px;background:#fff"></div>
<div class="a" style="left:6px;top:698px;width:927px;height:1px;background:#999"></div>
<div class="a" style="left:5px;top:699px;width:928px;height:3px;background:#fafafa"></div>
<div class="a" style="left:4px;top:702px;width:929px;height:1px;background:#aaa"></div>
</body></html>
